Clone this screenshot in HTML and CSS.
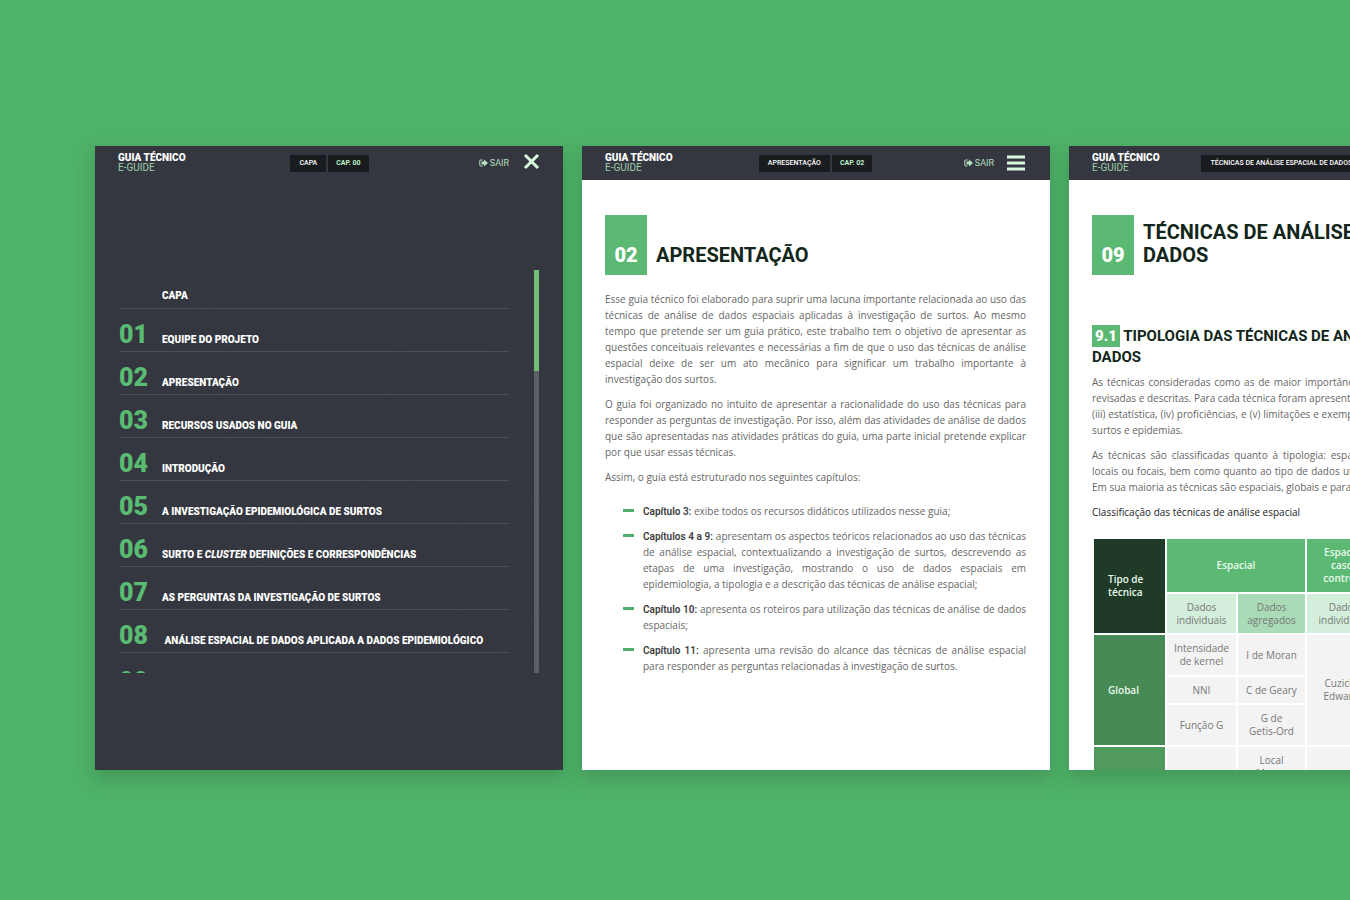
FILE: index.html
```html
<!DOCTYPE html>
<html lang="pt-BR">
<head>
<meta charset="utf-8">
<meta name="viewport" content="width=device-width, initial-scale=1">
<title>Guia Técnico E-Guide</title>
<link rel="stylesheet" href="styles.css">
</head>
<body>
<svg class="sprite" aria-hidden="true">
  <symbol id="exit" viewBox="0 0 18 16"><path d="M7 2H3.500Q1.500 2 1.500 4v8q0 2 2 2H7" fill="none" stroke="currentColor" stroke-width="2"/><path d="M5 5H10V1l8 7L10 15v-4H5z" fill="currentColor"/></symbol>
</svg>
<main class="strip">

  <section class="page page-menu">
    <svg class="map" viewBox="0 0 468 624" preserveAspectRatio="xMidYMid slice" aria-hidden="true">
      <path d="M325 30l12 22 60 28 70 28M337 52l-8 -22M365 70l-14 44-40 36-50-14-46 20M351 114l60 20 56 6M0 110l40 28 50-8 10 30 60-24 20-36M80 120l0-30 80 12M200 140l20-40 44 34 0 80M120 160l24 60-40 50M264 214l90-34 50 20 64-60M144 220l100-10 80 60 70-10M30 280l70-20 44 44 60-20M204 284l20 70-50 60M324 270l-20 60 60 50 90-30M224 354l80-24M90 360l60 20-10 70 60 50M364 380l-20 80 60 30M206 350v40l-40 30M200 500l30-20 70 22 12 24-24 46-90-30 2-42M312 526l100 40M300 572l100 20 30-66 38-20M400 592l40-30M395 550l14-60 58-30M215 510l60 10"/>
    </svg>
    <header class="bar">
      <div class="brand"><b>GUIA TÉCNICO</b><span>E-GUIDE</span></div>
      <div class="crumbs"><span>CAPA</span><span class="cap">CAP. 00</span></div>
      <div class="actions">
        <a class="exit" href="#sair"><svg><use href="#exit"/></svg>SAIR</a>
        <button class="toggle" type="button" aria-label="Fechar menu"><svg viewBox="0 0 20 20"><path d="M4 2l13 13M17 2L4 15" stroke-width="3"/></svg></button>
      </div>
    </header>
    <div class="scroller">
      <nav class="toc">
        <a href="#capa"><i></i><span>CAPA</span></a>
        <a href="#c1"><i>01</i><span>EQUIPE DO PROJETO</span></a>
        <a href="#c2"><i>02</i><span>APRESENTAÇÃO</span></a>
        <a href="#c3"><i>03</i><span>RECURSOS USADOS NO GUIA</span></a>
        <a href="#c4"><i>04</i><span>INTRODUÇÃO</span></a>
        <a href="#c5"><i>05</i><span>A INVESTIGAÇÃO EPIDEMIOLÓGICA DE SURTOS</span></a>
        <a href="#c6"><i>06</i><span>SURTO E <em>CLUSTER</em> DEFINIÇÕES E CORRESPONDÊNCIAS</span></a>
        <a href="#c7"><i>07</i><span>AS PERGUNTAS DA INVESTIGAÇÃO DE SURTOS</span></a>
        <a href="#c8"><i>08</i><span>&nbsp;ANÁLISE ESPACIAL DE DADOS APLICADA A DADOS EPIDEMIOLÓGICO</span></a>
        <a href="#c9"><i>09</i><span></span></a>
      </nav>
      <div class="track"><div class="thumb"></div></div>
    </div>
  </section>

  <section class="page">
    <header class="bar">
      <div class="brand"><b>GUIA TÉCNICO</b><span>E-GUIDE</span></div>
      <div class="crumbs"><span>APRESENTAÇÃO</span><span class="cap">CAP. 02</span></div>
      <div class="actions">
        <a class="exit" href="#sair"><svg><use href="#exit"/></svg>SAIR</a>
        <button class="toggle" type="button" aria-label="Abrir menu"><svg viewBox="0 0 20 20"><path d="M1 4h18M1 10h18M1 16h18" stroke-width="3"/></svg></button>
      </div>
    </header>
    <article class="content">
      <div class="title"><span class="num">02</span><h1>APRESENTAÇÃO</h1></div>
      <p>Esse guia técnico foi elaborado para suprir uma lacuna importante relacionada ao uso das técnicas de análise de dados espaciais aplicadas à investigação de surtos. Ao mesmo tempo que pretende ser um guia prático, este trabalho tem o objetivo de apresentar as questões conceituais relevantes e necessárias a fim de que o uso das técnicas de análise espacial deixe de ser um ato mecânico para significar um trabalho importante à investigação dos surtos.</p>
      <p>O guia foi organizado no intuito de apresentar a racionalidade do uso das técnicas para responder as perguntas de investigação. Por isso, além das atividades de análise de dados que são apresentadas nas atividades práticas do guia, uma parte inicial pretende explicar por que usar essas técnicas.</p>
      <p>Assim, o guia está estruturado nos seguintes capítulos:</p>
      <ul class="chapters">
        <li><b>Capítulo 3:</b> exibe todos os recursos didáticos utilizados nesse guia;</li>
        <li><b>Capítulos 4 a 9:</b> apresentam os aspectos teóricos relacionados ao uso das técnicas de análise espacial, contextualizando a investigação de surtos, descrevendo as etapas de uma investigação, mostrando o uso de dados espaciais em epidemiologia, a tipologia e a descrição das técnicas de análise espacial;</li>
        <li><b>Capítulo 10:</b> apresenta os roteiros para utilização das técnicas de análise de dados espaciais;</li>
        <li><b>Capítulo 11:</b> apresenta uma revisão do alcance das técnicas de análise espacial para responder as perguntas relacionadas à investigação de surtos.</li>
      </ul>
    </article>
  </section>

  <section class="page">
    <header class="bar">
      <div class="brand"><b>GUIA TÉCNICO</b><span>E-GUIDE</span></div>
      <div class="crumbs"><span>TÉCNICAS DE ANÁLISE ESPACIAL DE DADOS</span><span class="cap">CAP. 09</span></div>
      <div class="actions"></div>
    </header>
    <article class="content">
      <div class="title title-long"><span class="num">09</span><h1>TÉCNICAS DE ANÁLISE ESPACIAL DE DADOS</h1></div>
      <h2><span>9.1</span> TIPOLOGIA DAS TÉCNICAS DE ANÁLISE ESPACIAL DE<br>DADOS</h2>
      <p>As técnicas consideradas como as de maior importância para a investigação foram aqui revisadas e descritas. Para cada técnica foram apresentados: (i) conceito, (ii) pressupostos, (iii) estatística, (iv) proficiências, e (v) limitações e exemplos de aplicações em investigação, surtos e epidemias.</p>
      <p>As técnicas são classificadas quanto à tipologia: espaciais ou não espaciais, e globais, locais ou focais, bem como quanto ao tipo de dados utilizados: individuais ou agregados. Em sua maioria as técnicas são espaciais, globais e para dados individuais.</p>
      <table>
        <caption>Classificação das técnicas de análise espacial</caption>
        <colgroup><col class="c1"><col class="c2"><col class="c3"><col class="c4"></colgroup>
        <thead>
          <tr class="r-top"><th class="corner" rowspan="2">Tipo de<br>técnica</th><th colspan="2">Espacial</th><th>Espacial caso-controle</th></tr>
          <tr class="r-sub"><td>Dados individuais</td><td class="mid">Dados agregados</td><td>Dados individuais</td></tr>
        </thead>
        <tbody>
          <tr class="r-tall"><th rowspan="3">Global</th><td>Intensidade de kernel</td><td>I de Moran</td><td rowspan="3">Cuzick e Edwards</td></tr>
          <tr class="r-short"><td>NNI</td><td>C de Geary</td></tr>
          <tr class="r-tall"><td>Função G</td><td>G de<br>Getis-Ord</td></tr>
        </tbody>
        <tbody>
          <tr class="r-tall"><th class="local"></th><td></td><td>Local<br>Moran</td><td></td></tr>
        </tbody>
      </table>
    </article>
  </section>

</main>
</body>
</html>
```
FILE: styles.css
```css
* { box-sizing: border-box; }

body {
  margin: 0;
  min-height: 100vh;
  background: #4fb269;
  color: #666;
  font-family: Roboto, "Liberation Sans", sans-serif;
  font-size: 11px;
  line-height: 16px;
  overflow: hidden;
}

a { color: inherit; text-decoration: none; }
.sprite { position: absolute; width: 0; height: 0; }

.strip {
  display: grid;
  grid-auto-flow: column;
  grid-auto-columns: minmax(468px, 34%);
  gap: 19px;
  padding: 146px 0 0 95px;
}

.page {
  position: relative;
  aspect-ratio: 3 / 4;
  overflow: hidden;
  background: #fff;
  box-shadow: 0 8px 16px 2px rgba(50, 120, 65, 0.4);
}

.page-menu { background: #34373f; }

.map {
  position: absolute;
  inset: 0;
  width: 100%;
  height: 100%;
  fill: none;
  stroke: #393d41;
}

/* top bar */
.bar {
  position: relative;
  display: grid;
  grid-template-columns: 1fr auto 1fr;
  align-items: center;
  height: 34px;
  padding: 0 24px 0 23px;
  background: #34373f;
  color: #fff;
}
.page-menu .bar { padding-right: 22px; background: none; }

.brand { display: grid; line-height: 10px; font-size: 10px; }
.brand b { font-weight: 900; }
.brand span { color: #9ccfab; }

.crumbs { display: flex; gap: 2px; font-size: 7px; font-weight: 500; line-height: 17px; white-space: nowrap; }
.crumbs span { padding: 0 9px; background: #191b1e; }
.crumbs .cap { padding: 0 8px; color: #bdf0c6; font-weight: 700; }

.actions { display: flex; align-items: center; justify-content: flex-end; gap: 12px; }
.exit { display: flex; align-items: center; gap: 2px; font-size: 9px; color: #b5dfbf; }
.exit svg { width: 9px; height: 8px; }
.toggle { display: flex; padding: 0; border: 0; background: none; }
.toggle svg { width: 20px; height: 20px; fill: none; stroke: #d9f8df; }

/* chapter menu */
.scroller {
  position: relative;
  display: flex;
  justify-content: space-between;
  height: 403px;
  margin: 90px 24px 0;
}
.toc { width: 390px; overflow: hidden; }
.toc a {
  display: flex;
  align-items: baseline;
  height: 43px;
  padding-top: 13px;
  border-bottom: 1px solid #4c5054;
  color: #fff;
  font-size: 10px;
  font-weight: 900;
  line-height: 26px;
  white-space: nowrap;
}
.toc a:first-child { height: 39px; }
.toc a:last-child { padding-top: 16px; }
.toc i { flex: none; width: 43px; color: #5abb72; font-size: 25px; font-style: normal; }
.track { width: 5px; background: #5b5e63; }
.thumb { height: 25%; background: #74bf78; }

/* article */
.content { padding: 35px 24px 0 23px; font-family: "Open Sans", "Liberation Sans", sans-serif; font-size: 10px; text-align: justify; }
.content p { margin: 0 0 9px; }

.title { display: flex; align-items: flex-end; gap: 9px; margin-bottom: 16px; }
.num, h1, h2 { font-family: Roboto, "Liberation Sans", sans-serif; }
.num {
  flex: none;
  width: 42px;
  height: 60px;
  padding-top: 28px;
  background: #5bb974;
  color: #fff;
  font-size: 20px;
  font-weight: 900;
  line-height: 24px;
  text-align: center;
}
h1 { margin: 0; padding-bottom: 8px; color: #12261a; font-size: 20px; line-height: 23px; text-align: left; }
.title-long { margin-bottom: 50px; }

h2 { margin: 0 0 7px; color: #12261a; font-size: 15px; line-height: 20px; text-align: left; white-space: nowrap; }
h2 span { display: inline-block; padding: 1px 3px; background: #5bb974; color: #fff; font-weight: 900; }

.chapters { display: grid; gap: 9px; margin: 18px 0 0; padding: 0 0 0 38px; list-style: none; }
.chapters li { position: relative; }
.chapters li::before {
  content: "";
  position: absolute;
  top: 6px;
  left: -20px;
  width: 11px;
  height: 3px;
  background: #4fae6c;
}
.chapters b { color: #3d3d3d; font-family: Roboto, "Liberation Sans", sans-serif; font-weight: 600; line-height: 1; }

/* classification table */
table {
  width: 290px;
  border-collapse: separate;
  border-spacing: 2px;
  table-layout: fixed;
  font-size: 10px;
  line-height: 13px;
  text-align: center;
}
caption { margin-bottom: 17px; color: #222; font-weight: 500; line-height: 16px; text-align: left; }
.c1 { width: 71px; }
.c2 { width: 69px; }
.c3 { width: 67px; }
.c4 { width: 73px; }
th, td { padding: 0 8px; background: #f3f3f3; color: #777; }
td { padding: 0; }
th { background: #5bb974; color: #e9f9ec; font-weight: 600; }
thead .corner { padding-left: 14px; background: #1f3a26; text-align: left; }
tbody th { padding-left: 14px; background: #488a56; text-align: left; }
tbody .local { background: #509a60; }
.r-sub td { background: #d3eedb; }
.r-sub .mid { background: #a9dcb6; }
.r-top { height: 53px; }
.r-sub { height: 39px; }
.r-tall { height: 40px; }
.r-short { height: 26px; }
```
